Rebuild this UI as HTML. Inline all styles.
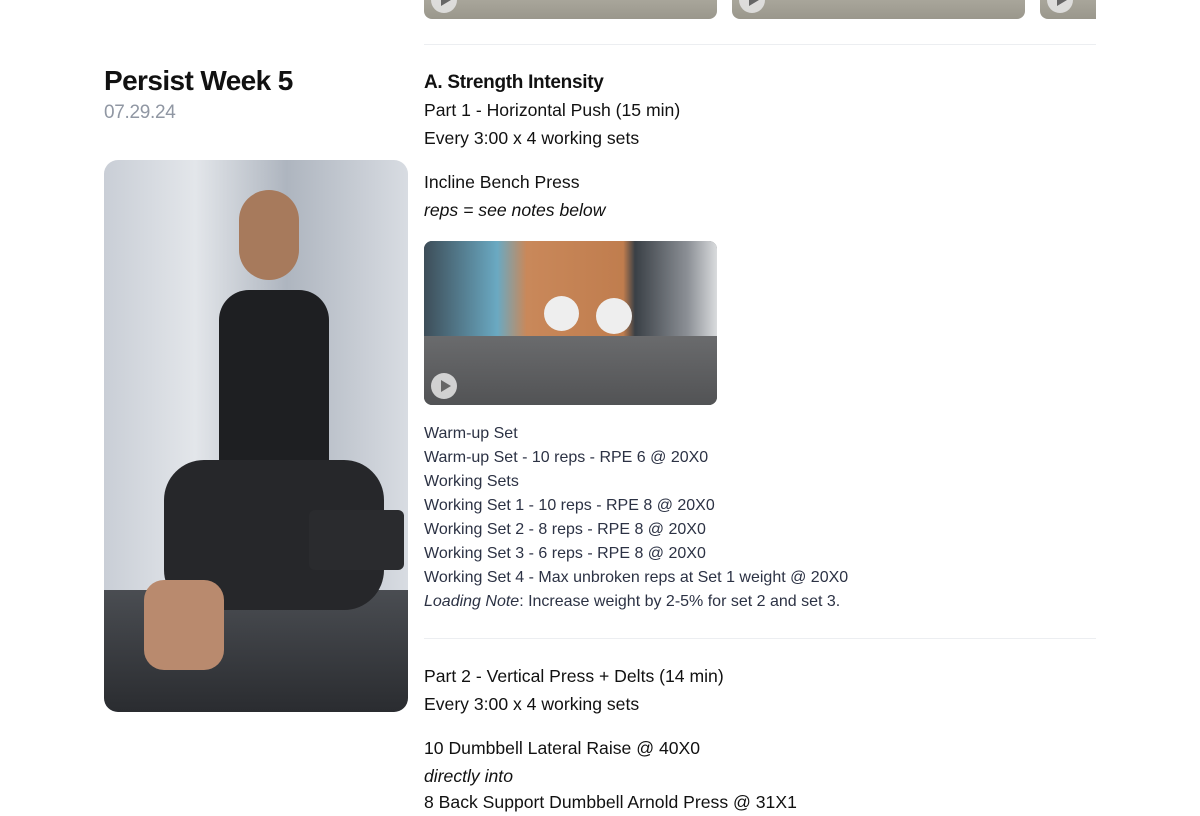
<!DOCTYPE html>
<html><head><meta charset="utf-8"><style>
*{margin:0;padding:0;box-sizing:border-box}
body{width:1200px;height:800px;overflow:hidden;background:#fff;font-family:"Liberation Sans",sans-serif;color:#111;position:relative}
.a{position:absolute;white-space:nowrap}
.thumb{position:absolute;top:-20px;height:39px;border-radius:8px;background:linear-gradient(#b8b5aa,#9a978c);overflow:hidden}
.play{position:absolute;width:26px;height:26px;border-radius:50%;background:rgba(230,230,230,.85)}
.play:after{content:"";position:absolute;left:10px;top:7px;border-left:10px solid #666;border-top:6px solid transparent;border-bottom:6px solid transparent}
.l{font-size:17.6px;line-height:28px}
.s{font-size:16px;line-height:24px;color:#2c3244}
</style></head><body>
<div class="thumb" style="left:424px;width:293px"><div class="play" style="left:7px;top:7px"></div></div>
<div class="thumb" style="left:732px;width:293px"><div class="play" style="left:7px;top:7px"></div></div>
<div class="thumb" style="left:1040px;width:56px;border-radius:8px 0 0 8px"><div class="play" style="left:7px;top:7px"></div></div>
<div class="a" style="left:424px;top:44px;width:672px;height:1px;background:#eceef1"></div>

<div class="a" style="left:104px;top:65px;font-size:28px;font-weight:bold;letter-spacing:-0.6px">Persist Week 5</div>
<div class="a" style="left:104px;top:102px;font-size:19px;color:#9097a3;letter-spacing:-0.3px">07.29.24</div>

<div class="a" style="left:104px;top:160px;width:304px;height:552px;border-radius:14px;overflow:hidden;background:linear-gradient(90deg,#c9ced6 0%,#e3e6ea 30%,#aeb5bf 60%,#d8dce2 100%)">
 <div style="position:absolute;left:0;top:430px;width:304px;height:122px;background:linear-gradient(#4a4d52,#2a2c30)"></div>
 <div style="position:absolute;left:115px;top:130px;width:110px;height:230px;background:#1e1f22;border-radius:30px 30px 10px 10px"></div>
 <div style="position:absolute;left:135px;top:30px;width:60px;height:90px;background:#a77a5c;border-radius:30px"></div>
 <div style="position:absolute;left:60px;top:300px;width:220px;height:150px;background:#26272a;border-radius:40px"></div>
 <div style="position:absolute;left:40px;top:420px;width:80px;height:90px;background:#b98a6e;border-radius:20px"></div>
 <div style="position:absolute;left:205px;top:350px;width:95px;height:60px;background:#2a2b2e;border-radius:6px"></div>
</div>

<div class="a" style="left:424px;top:70px;font-size:19px;font-weight:bold;line-height:26px;letter-spacing:-0.3px">A. Strength Intensity</div>
<div class="a l" style="left:424px;top:96px">Part 1 - Horizontal Push (15 min)</div>
<div class="a l" style="left:424px;top:124px">Every 3:00 x 4 working sets</div>
<div class="a l" style="left:424px;top:168px">Incline Bench Press</div>
<div class="a l" style="left:424px;top:196px;font-style:italic">reps = see notes below</div>

<div class="a" style="left:424px;top:241px;width:293px;height:164px;border-radius:8px;overflow:hidden;background:#5d5e60">
 <div style="position:absolute;left:0;top:0;width:293px;height:95px;background:linear-gradient(90deg,#3d4d58 0%,#6aa9c2 25%,#c9885a 35%,#c07d4e 68%,#3a4046 72%,#8c9096 90%,#d9dbdd 100%)"></div>
 <div style="position:absolute;left:0;top:95px;width:293px;height:69px;background:linear-gradient(#6a6b6d,#525355)"></div>
 <div style="position:absolute;left:120px;top:55px;width:35px;height:35px;border-radius:50%;background:#eee"></div>
 <div style="position:absolute;left:172px;top:57px;width:36px;height:36px;border-radius:50%;background:#eee"></div>
 <div class="play" style="left:7px;top:132px"></div>
</div>

<div class="a s" style="left:424px;top:422px">Warm-up Set</div>
<div class="a s" style="left:424px;top:446px">Warm-up Set - 10 reps - RPE 6 @ 20X0</div>
<div class="a s" style="left:424px;top:470px">Working Sets</div>
<div class="a s" style="left:424px;top:494px">Working Set 1 - 10 reps - RPE 8 @ 20X0</div>
<div class="a s" style="left:424px;top:518px">Working Set 2 - 8 reps - RPE 8 @ 20X0</div>
<div class="a s" style="left:424px;top:542px">Working Set 3 - 6 reps - RPE 8 @ 20X0</div>
<div class="a s" style="left:424px;top:566px">Working Set 4 - Max unbroken reps at Set 1 weight @ 20X0</div>
<div class="a s" style="left:424px;top:590px"><i>Loading Note</i>: Increase weight by 2-5% for set 2 and set 3.</div>
<div class="a" style="left:424px;top:638px;width:672px;height:1px;background:#eceef1"></div>

<div class="a l" style="left:424px;top:662px">Part 2 - Vertical Press + Delts (14 min)</div>
<div class="a l" style="left:424px;top:690px">Every 3:00 x 4 working sets</div>
<div class="a l" style="left:424px;top:734px">10 Dumbbell Lateral Raise @ 40X0</div>
<div class="a l" style="left:424px;top:762px;font-style:italic">directly into</div>
<div class="a l" style="left:424px;top:788px">8 Back Support Dumbbell Arnold Press @ 31X1</div>
</body></html>
